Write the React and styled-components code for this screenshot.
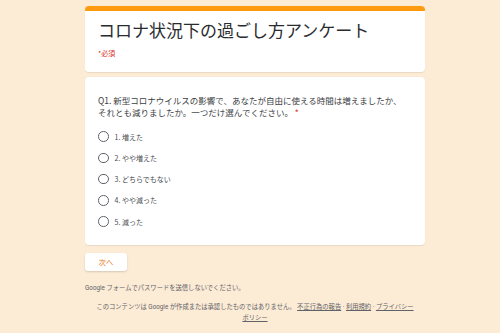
import React from "react";
import styled, { createGlobalStyle } from "styled-components";

const Global = createGlobalStyle`
  html, body { margin: 0; padding: 0; background: #fcebd5; }
  body { font-family: Roboto, "Noto Sans CJK JP", "Noto Sans", sans-serif; color: #202124; overflow: hidden; }
`;

const Page = styled.div`
  width: 340px;
  margin-left: 85px;
  padding-top: 6px;
`;

const Card = styled.div`
  background: #ffffff;
  border-radius: 4px;
  box-shadow: 0 0.5px 1px rgba(0,0,0,0.08);
  margin-bottom: ${(p) => p.$mb || 0}px;
  overflow: hidden;
`;

const HeaderBar = styled.div`
  height: 5px;
  background: #fd9a10;
`;

const HeaderBody = styled.div`
  padding: 9px 13px 14px;
`;

const Title = styled.h1`
  margin: 0;
  font-weight: 400;
  font-size: 17px;
  line-height: 20px;
  color: #2a2b2e;
  font-family: "Noto Sans CJK JP", sans-serif;
`;

const Required = styled.div`
  margin-top: 8px;
  font-size: 7px;
  line-height: 10px;
  color: #d93025;
  font-family: "Noto Sans CJK JP", sans-serif;
`;

const QuestionBody = styled.div`
  padding: 17px 13px 18px;
`;

const Question = styled.div`
  font-size: 8.5px;
  line-height: 12px;
  color: #3c4043;
  font-family: "Noto Sans CJK JP", sans-serif;
  span { color: #d93025; }
`;

const Options = styled.div`
  margin-top: 13px;
  display: flex;
  flex-direction: column;
  gap: 10.25px;
`;

const Option = styled.label`
  display: flex;
  align-items: center;
  gap: 6px;
  height: 11px;
  font-size: 7px;
  color: #4a4d51;
  font-family: "Noto Sans CJK JP", sans-serif;
`;

const Radio = styled.span`
  width: 8.5px;
  height: 8.5px;
  border: 1.5px solid #5f6368;
  border-radius: 50%;
  flex: none;
`;

const Button = styled.button`
  margin-top: 8px;
  width: 42px;
  height: 18px;
  border: none;
  border-radius: 3px;
  background: #fff;
  box-shadow: 0 1px 2px rgba(0,0,0,0.15);
  color: #e8710a;
  font-size: 7.2px;
  font-family: "Noto Sans CJK JP", sans-serif;
  padding: 0;
`;

const Warn = styled.div`
  margin-top: 13px;
  font-size: 6.3px;
  line-height: 9px;
  color: #5f6368;
  font-family: Roboto, "Noto Sans CJK JP", sans-serif;
`;

const Legal = styled.div`
  margin-top: 9px;
  text-align: center;
  font-size: 6.3px;
  line-height: 10.5px;
  color: #5f6368;
  padding: 0 8px;
  font-family: Roboto, "Noto Sans CJK JP", sans-serif;
  a { color: #5f6368; text-decoration: underline; }
`;

const Logo = styled.div`
  margin-top: 6px;
  text-align: center;
  font-size: 11px;
  color: #80868b;
  font-family: "Liberation Sans", "Noto Sans CJK JP", sans-serif;
`;

const options = ["1. 増えた", "2. やや増えた", "3. どちらでもない", "4. やや減った", "5. 減った"];

export default function App() {
  return (
    <>
      <Global />
      <Page>
        <Card $mb={5}>
          <HeaderBar />
          <HeaderBody>
            <Title>コロナ状況下の過ごし方アンケート</Title>
            <Required>*必須</Required>
          </HeaderBody>
        </Card>
        <Card>
          <QuestionBody>
            <Question>
              Q1. 新型コロナウイルスの影響で、あなたが自由に使える時間は増えましたか、
              <br />
              それとも減りましたか。一つだけ選んでください。 <span>*</span>
            </Question>
            <Options>
              {options.map((o) => (
                <Option key={o}>
                  <Radio />
                  {o}
                </Option>
              ))}
            </Options>
          </QuestionBody>
        </Card>
        <Button>次へ</Button>
        <Warn>Google フォームでパスワードを送信しないでください。</Warn>
        <Legal>
          このコンテンツは Google が作成または承認したものではありません。 <a>不正行為の報告</a> · <a>利用規約</a> · <a>プライバシー ポリシー</a>
        </Legal>
        <Logo>Google フォーム</Logo>
      </Page>
    </>
  );
}
